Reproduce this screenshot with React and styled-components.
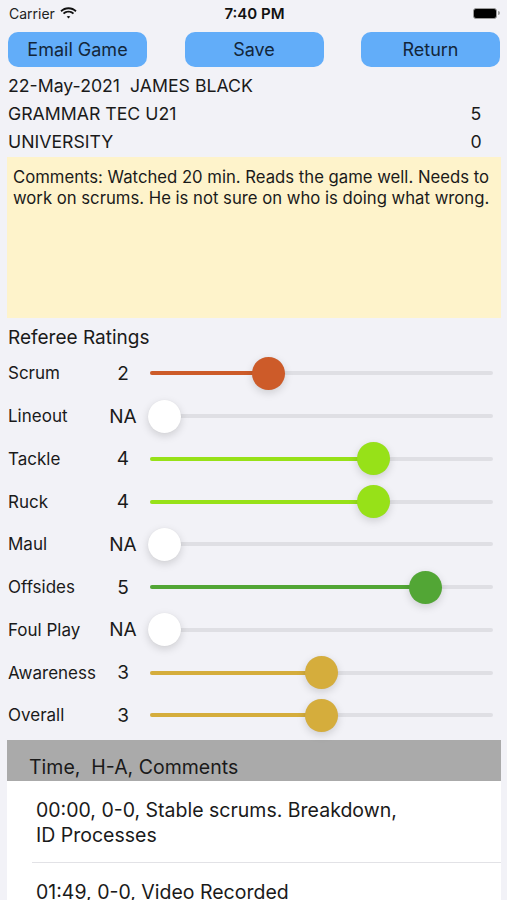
import styled, { createGlobalStyle } from 'styled-components';

const GlobalStyle = createGlobalStyle`
  html, body {
    margin: 0;
    padding: 0;
    background: #f2f2f7;
  }
  body {
    font-family: Inter, "Liberation Sans", sans-serif;
    color: #111;
  }
`;

const ratings = [
    { label: 'Scrum', value: 2, color: '#cd5b29' },
    { label: 'Lineout', value: null },
    { label: 'Tackle', value: 4, color: '#97e118' },
    { label: 'Ruck', value: 4, color: '#97e118' },
    { label: 'Maul', value: null },
    { label: 'Offsides', value: 5, color: '#52a635' },
    { label: 'Foul Play', value: null },
    { label: 'Awareness', value: 3, color: '#d5ad3c' },
    { label: 'Overall', value: 3, color: '#d5ad3c' },
];

const notes = [
    '00:00, 0-0, Stable scrums. Breakdown,\nID Processes',
    '01:49, 0-0, Video Recorded',
];

function Slider({ value, color }) {
    const pct = value == null ? 0 : value / 6;
    return (
        <Track>
            <Fill style={{ width: `calc(${pct} * (100% - 29px) + 14px)` }} $color={color} />
            <Thumb style={{ left: `calc(${pct} * (100% - 29px) - 2.5px)` }} $color={color} />
        </Track>
    );
}

export default function App() {
    return (
        <Screen>
            <GlobalStyle />
            <StatusBar>
                <Carrier>
                    Carrier
                    <svg width="17" height="12" viewBox="0 0 17 12">
                        <path d="M8.5 2.2c2.6 0 5 1 6.8 2.7l1.3-1.3C14.4 1.5 11.6.3 8.5.3S2.6 1.5.4 3.6l1.3 1.3C3.5 3.2 5.9 2.2 8.5 2.2z" fill="#111" />
                        <path d="M8.5 5.6c1.6 0 3.1.6 4.3 1.7l1.3-1.3C12.6 4.6 10.6 3.7 8.5 3.7S4.4 4.6 2.9 6l1.3 1.3c1.2-1.1 2.7-1.7 4.3-1.7z" fill="#111" />
                        <path d="M8.5 8.9c.7 0 1.3.3 1.8.7L8.5 11.5 6.7 9.6c.5-.4 1.1-.7 1.8-.7z" fill="#111" />
                    </svg>
                </Carrier>
                <Clock>7:40 PM</Clock>
                <Battery>
                    <BatteryBody />
                    <BatteryCap />
                </Battery>
            </StatusBar>

            <ButtonRow>
                <Button>Email Game</Button>
                <Button>Save</Button>
                <Button>Return</Button>
            </ButtonRow>

            <Info>
                <InfoLine>22-May-2021&nbsp;&nbsp;JAMES BLACK</InfoLine>
                <InfoLine>
                    <span>GRAMMAR TEC U21</span>
                    <Score>5</Score>
                </InfoLine>
                <InfoLine>
                    <span>UNIVERSITY</span>
                    <Score>0</Score>
                </InfoLine>
            </Info>

            <Comments>
                Comments: Watched 20 min. Reads the game well. Needs to work on scrums. He is not sure on who is doing what wrong.
            </Comments>

            <SectionTitle>Referee Ratings</SectionTitle>
            <Ratings>
                {ratings.map((r) => (
                    <RatingRow key={r.label}>
                        <RatingLabel>{r.label}</RatingLabel>
                        <RatingValue>{r.value == null ? 'NA' : r.value}</RatingValue>
                        <Slider value={r.value} color={r.color} />
                    </RatingRow>
                ))}
            </Ratings>

            <Table>
                <TableHeader>Time,&nbsp; H-A, Comments</TableHeader>
                <TableBody>
                    {notes.map((n, i) => (
                        <NoteRow key={i}>{n}</NoteRow>
                    ))}
                </TableBody>
            </Table>
        </Screen>
    );
}

const Screen = styled.div`
    width: 507px;
    height: 900px;
    overflow: hidden;
    background: #f2f2f7;
`;

const StatusBar = styled.div`
    height: 28px;
    display: grid;
    grid-template-columns: 1fr auto 1fr;
    align-items: center;
    padding: 0 7px 2px 9px;
    box-sizing: border-box;
`;

const Carrier = styled.div`
    display: flex;
    align-items: center;
    gap: 5px;
    font-size: 14px;
    color: #222;
`;

const Clock = styled.div`
    font-size: 15px;
    font-weight: 600;
    color: #111;
`;

const Battery = styled.div`
    justify-self: end;
    display: flex;
    align-items: center;
    gap: 1px;
`;

const BatteryBody = styled.div`
    width: 22px;
    height: 9px;
    border-radius: 3px;
    background: #000;
    border: 1.5px solid #9a9a9a;
`;

const BatteryCap = styled.div`
    width: 2px;
    height: 4px;
    border-radius: 0 2px 2px 0;
    background: #9a9a9a;
`;

const ButtonRow = styled.div`
    display: flex;
    justify-content: space-between;
    padding: 4px 7px 0 8px;
`;

const Button = styled.button`
    width: 139px;
    height: 35px;
    border: none;
    border-radius: 10px;
    background: #62adf9;
    color: #13263a;
    font-family: Inter, "Liberation Sans", sans-serif;
    font-size: 18px;
    padding: 0;
`;

const Info = styled.div`
    margin-top: 4px;
`;

const InfoLine = styled.div`
    height: 28px;
    display: flex;
    align-items: center;
    justify-content: space-between;
    padding: 0 25px 0 8px;
    font-size: 17.7px;
    color: #1a1a1a;
`;

const Score = styled.span`
    width: 12px;
    text-align: center;
`;

const Comments = styled.div`
    box-sizing: border-box;
    height: 161px;
    margin: 2px 6px 0 7px;
    padding: 10px 8px 0 6px;
    background: #fef3cb;
    font-size: 16.7px;
    line-height: 21px;
    color: #1a1a1a;
`;

const SectionTitle = styled.div`
    height: 34px;
    box-sizing: border-box;
    padding: 4px 8px 0;
    display: flex;
    align-items: center;
    font-size: 19px;
    color: #1a1a1a;
`;

const Ratings = styled.div`
    display: flex;
    flex-direction: column;
`;

const RatingRow = styled.div`
    height: 42.75px;
    display: grid;
    grid-template-columns: 100px 30px 1fr;
    align-items: center;
    padding: 0 14px 0 8px;
`;

const RatingLabel = styled.span`
    font-size: 17px;
    color: #1a1a1a;
`;

const RatingValue = styled.span`
    font-size: 19px;
    text-align: center;
    color: #1a1a1a;
`;

const Track = styled.div`
    position: relative;
    height: 4px;
    margin-left: 12px;
    border-radius: 2px;
    background: #dfdfe4;
`;

const Fill = styled.div`
    height: 100%;
    border-radius: 2px;
    background: ${(p) => p.$color || 'transparent'};
`;

const Thumb = styled.div`
    position: absolute;
    top: 50%;
    width: 33px;
    height: 33px;
    margin-top: -16.5px;
    border-radius: 50%;
    background: ${(p) => p.$color || '#ffffff'};
    box-shadow: 0 3px 8px rgba(0, 0, 0, 0.15), 0 0 1px rgba(0, 0, 0, 0.08);
`;

const Table = styled.div`
    margin: 3px 6px 0 7px;
`;

const TableHeader = styled.div`
    height: 41px;
    box-sizing: border-box;
    padding: 16px 0 0 22px;
    background: #aaaaaa;
    font-size: 19.5px;
    line-height: 22px;
    color: #1a1a1a;
`;

const TableBody = styled.div`
    background: #ffffff;
    padding-left: 25px;
`;

const NoteRow = styled.div`
    padding: 17px 0 14px 4px;
    font-size: 19.5px;
    line-height: 25px;
    white-space: pre-line;
    color: #1a1a1a;
    border-bottom: 1px solid #e2e2e6;
`;
